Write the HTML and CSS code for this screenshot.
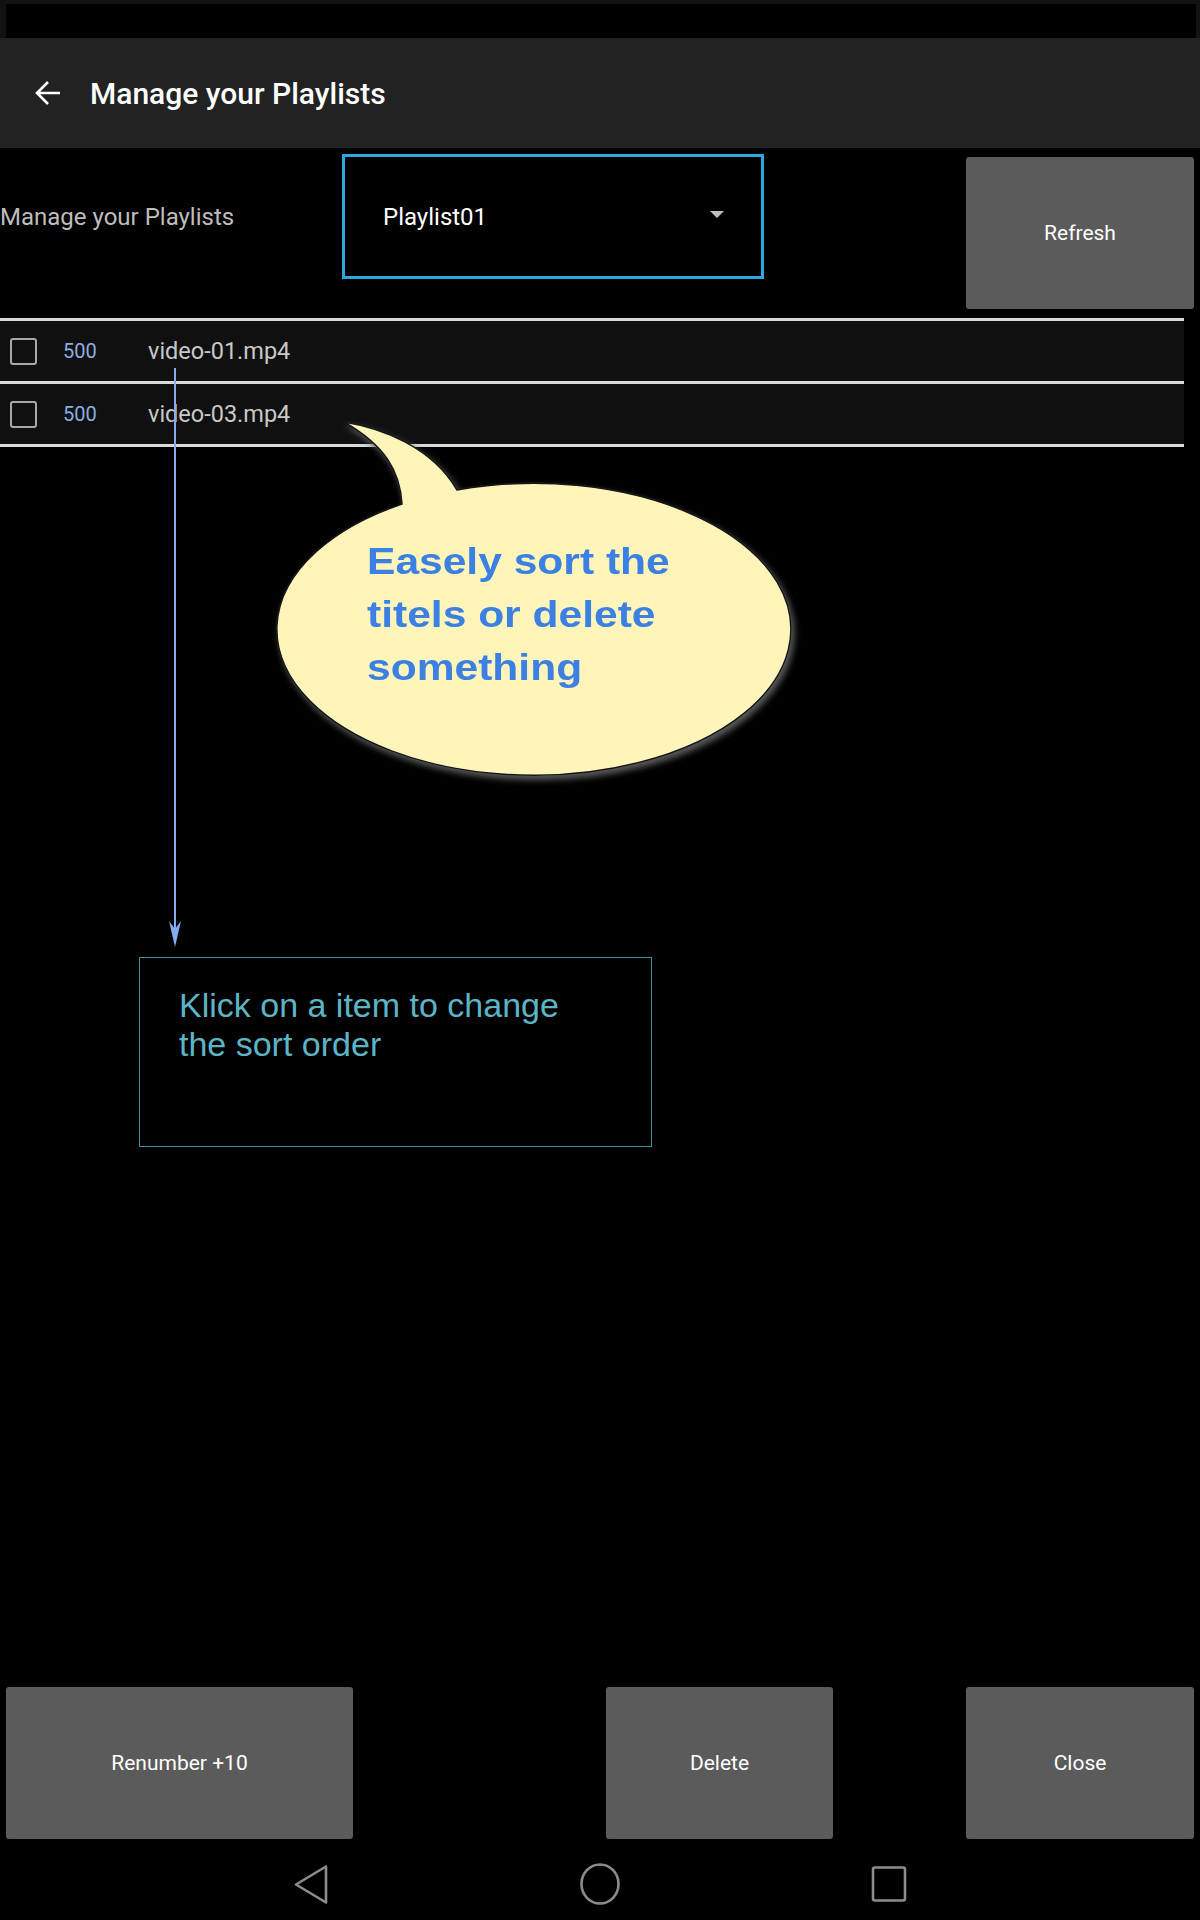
FILE: index.html
```html
<!DOCTYPE html>
<html lang="en">
<head>
    <meta charset="UTF-8">
    <meta name="viewport" content="width=device-width, initial-scale=1.0">
    <title>Manage your Playlists</title>
    <link rel="stylesheet" href="styles.css">
</head>
<body>
    <div class="page">
        <div class="status-bar"><div class="status-inner"></div></div>

        <div class="app-bar">
            <svg class="back-icon" width="30" height="28" viewBox="0 0 30 28">
                <path d="M27 14 H5 M15 3 L4 14 L15 25" fill="none" stroke="#fff" stroke-width="2.6"/>
            </svg>
            <h1 class="app-title">Manage your Playlists</h1>
        </div>

        <div class="content">
            <div class="controls">
                <div class="controls-label">Manage your Playlists</div>
                <div class="playlist-select">
                    <span>Playlist01</span>
                    <svg width="14" height="8" viewBox="0 0 14 8"><path d="M0 0 H14 L7 7 Z" fill="#bdbdbd"/></svg>
                </div>
                <button class="btn btn-refresh">Refresh</button>
            </div>

            <div class="track-list">
                <div class="track-row">
                    <span class="check"></span>
                    <span class="track-no">500</span>
                    <span class="track-name">video-01.mp4</span>
                </div>
                <div class="track-row">
                    <span class="check"></span>
                    <span class="track-no">500</span>
                    <span class="track-name">video-03.mp4</span>
                </div>
            </div>
        </div>

        <div class="actions">
            <button class="btn btn-renumber">Renumber +10</button>
            <button class="btn btn-delete">Delete</button>
            <button class="btn btn-close">Close</button>
        </div>

        <div class="nav-bar">
            <svg width="36" height="41" viewBox="0 0 36 41">
                <path d="M33 2.5 L3 20.5 L33 38.5 Z" fill="none" stroke="#8c8c8c" stroke-width="2.6" stroke-linejoin="round"/>
            </svg>
            <svg width="40" height="42" viewBox="0 0 40 42">
                <ellipse cx="20" cy="21" rx="18.5" ry="19.5" fill="none" stroke="#8c8c8c" stroke-width="2.6"/>
            </svg>
            <svg width="36" height="36" viewBox="0 0 36 36">
                <rect x="2" y="1.5" width="32" height="33" rx="2" fill="none" stroke="#8c8c8c" stroke-width="2.6"/>
            </svg>
        </div>

        <!-- help callouts drawn over the screen -->
        <svg class="callouts" width="1200" height="1920" viewBox="0 0 1200 1920">
            <defs>
                <filter id="bubbleShadow" x="-10%" y="-10%" width="120%" height="130%">
                    <feDropShadow dx="3" dy="4" stdDeviation="3" flood-color="#5a5a5a"/>
                </filter>
            </defs>
            <path d="M402 504 C400 472 386 446 344 422 C382 428 432 447 457 490 A257 146 0 1 1 402 504 Z"
                  fill="#fff5bb" stroke="#161616" stroke-width="1.5" filter="url(#bubbleShadow)"/>
            <line x1="175" y1="368" x2="175" y2="930" stroke="#84acee" stroke-width="2"/>
            <path d="M169 921 L175 929 L181 921 L175 947 Z" fill="#84acee"/>
        </svg>

        <div class="bubble-text">Easely sort the titels or delete something</div>

        <div class="hint-box">
            <p>Klick on a item to change the sort order</p>
        </div>
    </div>
</body>
</html>
```

FILE: styles.css
```css
* {
    margin: 0;
    padding: 0;
    box-sizing: border-box;
}

body {
    background: #000;
    font-family: Roboto, "Noto Sans", sans-serif;
}

.page {
    position: relative;
    width: 1200px;
    height: 1920px;
    display: flex;
    flex-direction: column;
    overflow: hidden;
}

.status-bar {
    height: 38px;
    background: #121212;
    padding: 4px 4px 0 6px;
}

.status-inner {
    height: 100%;
    background: #000;
}

.app-bar {
    height: 110px;
    background: #222;
    display: flex;
    align-items: center;
    padding-left: 33px;
}

.back-icon {
    display: block;
}

.app-title {
    margin-left: 27px;
    font-size: 30px;
    font-weight: 500;
    color: #fff;
}

.content {
    flex: 1;
}

.controls {
    height: 170px;
    display: flex;
    align-items: flex-start;
    padding-top: 6px;
}

.controls-label {
    width: 342px;
    height: 125px;
    display: flex;
    align-items: center;
    font-size: 24px;
    color: #bdbdbd;
}

.playlist-select {
    width: 422px;
    height: 125px;
    border: 3px solid #29a9df;
    display: flex;
    align-items: center;
    justify-content: space-between;
    padding: 0 37px 0 38px;
    font-size: 24px;
    color: #fff;
}

.playlist-select svg {
    margin-top: -4px;
}

.btn {
    border: none;
    border-radius: 3px;
    background: #5b5b5b;
    color: #fff;
    font-family: Roboto, "Noto Sans", sans-serif;
    font-size: 21px;
    height: 152px;
}

.btn-refresh {
    width: 228px;
    margin: 3px 6px 0 auto;
}

.track-list {
    width: 1184px;
    border-top: 3px solid #d9d9d9;
}

.track-row {
    height: 63px;
    background: #101010;
    border-bottom: 3px solid #d9d9d9;
    display: flex;
    align-items: center;
}

.check {
    width: 27px;
    height: 27px;
    margin-left: 10px;
    border: 2.5px solid #a8a8a8;
    border-radius: 3px;
}

.track-no {
    width: 85px;
    margin-left: 26px;
    font-size: 20px;
    color: #8aaee0;
}

.track-name {
    font-size: 23.5px;
    color: #c8c8c8;
}

.actions {
    display: flex;
    padding-left: 6px;
}

.btn-renumber {
    width: 347px;
}

.btn-delete {
    width: 227px;
    margin-left: 253px;
}

.btn-close {
    width: 228px;
    margin-left: 133px;
}

.nav-bar {
    height: 81px;
    padding-top: 9px;
    display: flex;
    align-items: center;
    justify-content: center;
    gap: 251px;
}

.nav-bar svg {
    display: block;
}

/* callouts layer */
.callouts {
    position: absolute;
    left: 0;
    top: 0;
    pointer-events: none;
}

.bubble-text {
    position: absolute;
    left: 367px;
    top: 535px;
    width: 290px;
    font-family: "Liberation Sans", Arial, sans-serif;
    font-weight: bold;
    font-size: 37px;
    line-height: 53px;
    color: #3b80e2;
    transform: scaleX(1.15);
    transform-origin: left top;
}

.hint-box {
    position: absolute;
    left: 139px;
    top: 957px;
    width: 513px;
    height: 190px;
    border: 1px solid #3f909d;
    padding: 28px 50px 0 39px;
}

.hint-box p {
    font-family: "Liberation Sans", Arial, sans-serif;
    font-size: 34px;
    line-height: 39px;
    color: #5db4c5;
}
```
